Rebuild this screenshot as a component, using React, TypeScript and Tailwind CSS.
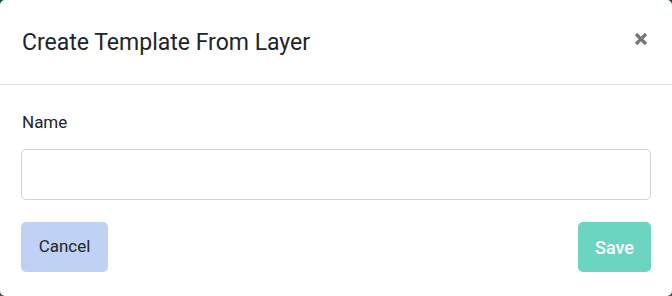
export default function App() {
  return (
    <div className="w-[672px] h-[296px] bg-gradient-to-b from-[#0e4d45] to-[#4a4a4a]">
      <div
        className="w-full h-full bg-white rounded-[5px] flex flex-col text-[#212529]"
        style={{ fontFamily: 'Roboto, "Liberation Sans", sans-serif' }}
      >
        {/* Header */}
        <div className="h-[85px] flex items-center justify-between pl-[22px] pr-[24px] border-b border-[#dee2e6]">
          <h2 className="text-[23px] leading-none pt-px">Create Template From Layer</h2>
          <button className="text-[#777] pb-[6px]">
            <svg width="14" height="14" viewBox="0 0 14 14">
              <path d="M2 2 L12 12 M12 2 L2 12" stroke="currentColor" strokeWidth="3.2" strokeLinecap="butt" />
            </svg>
          </button>
        </div>

        {/* Body */}
        <div className="flex flex-col px-[21px] pt-[26px]">
          <label className="text-[17px] leading-[22px] ml-px">Name</label>
          <input
            type="text"
            className="mt-[16px] h-[51px] w-full rounded-[5px] border border-[#ced4da] px-3 outline-none"
          />
          <div className="mt-[22px] flex justify-between">
            <button className="h-[50px] w-[87px] rounded-[5px] bg-[#bfd2f6] text-[17px] text-[#212529]">
              Cancel
            </button>
            <button className="h-[50px] w-[73px] rounded-[5px] bg-[#6cd5bf] text-[18px] text-white font-medium">
              Save
            </button>
          </div>
        </div>
      </div>
    </div>
  );
}
